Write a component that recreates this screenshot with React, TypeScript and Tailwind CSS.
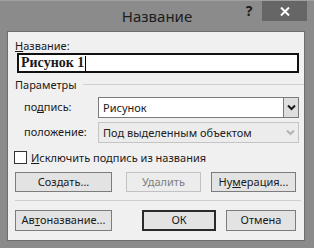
import React from 'react';

function Chevron({ disabled }: { disabled?: boolean }) {
  return (
    <svg width="9" height="7" viewBox="0 0 9 7" className="block">
      <path
        d="M1 1.5 L4.5 5 L8 1.5"
        fill="none"
        stroke={disabled ? '#b4b4b4' : '#1a1a1a'}
        strokeWidth="2"
      />
    </svg>
  );
}

function Select({ value, disabled }: { value: string; disabled?: boolean }) {
  return (
    <div
      className={`flex h-[21px] w-[201px] border ${
        disabled ? 'border-[#c4c4c4] bg-[#ececec] text-[#222]' : 'border-[#7a7a7a] bg-white text-[#1a1a1a]'
      }`}
    >
      <div className="flex-1 pl-[4px] leading-[19px]">{value}</div>
      <div
        className={`flex w-[15px] items-center justify-center ${
          disabled ? 'bg-[#ececec]' : 'border-l border-[#7a7a7a] bg-[#dedede]'
        }`}
      >
        <Chevron disabled={disabled} />
      </div>
    </div>
  );
}

function Btn({
  children,
  w,
  disabled,
  primary,
  h = 'h-[20px]',
}: {
  children: React.ReactNode;
  w: string;
  disabled?: boolean;
  primary?: boolean;
  h?: string;
}) {
  const border = primary
    ? 'border-2 border-[#2a2a2a]'
    : disabled
    ? 'border border-[#c2c2c2]'
    : 'border border-[#7c7c7c]';
  return (
    <div
      className={`${w} ${h} ${border} flex items-center justify-center ${
        disabled ? 'bg-[#ececec] text-[#7e7e7e]' : 'bg-[#e3e3e3] text-[#1a1a1a]'
      }`}
    >
      {children}
    </div>
  );
}

export default function App() {
  return (
    <div
      className="flex h-[248px] w-[314px] flex-col bg-[#8b8b8b] text-[11px]"
      style={{ fontFamily: '"Noto Sans", "Open Sans", sans-serif' }}
    >
      {/* title bar */}
      <div className="relative flex h-[31px] shrink-0 justify-center border-t border-[#a0a0a0]">
        <span className="pt-[4px] text-[15px] leading-[22px] text-[#1c1c1c]">Название</span>
        <div className="absolute right-[7px] top-0 flex">
          <div className="w-[26px] pt-[1px] text-center text-[14px] font-bold leading-[18px] text-[#1c1c1c]">?</div>
          <div className="flex h-[20px] w-[45px] items-center justify-center bg-[#666666]">
            <svg width="10" height="9" viewBox="0 0 10 9">
              <path d="M1 0.5 L9 8.5 M9 0.5 L1 8.5" stroke="#fff" strokeWidth="2" />
            </svg>
          </div>
        </div>
      </div>

      {/* client area */}
      <div className="ml-[7px] flex h-[210px] w-[298px] flex-col border border-[#6e6e6e] bg-[#f0f0f0] pl-[7px] pt-[6px] text-[#1a1a1a]">
        <div className="leading-[15px]">
          <span className="underline">Н</span>азвание:
        </div>
        <div className="ml-[2px] flex h-[20px] w-[282px] items-center border-2 border-[#111] bg-white pl-[2px]">
          <span className="text-[14px] font-bold leading-[16px]" style={{ fontFamily: '"Liberation Serif", serif' }}>
            Рисунок 1
          </span>
          <span className="ml-[1px] h-[15px] w-px bg-black" />
        </div>

        <div className="mt-[4px] flex items-center">
          <span className="leading-[15px]">Параметры</span>
          <div className="ml-[6px] h-px flex-1 bg-[#d0d0d0]" />
        </div>

        <div className="mt-[5px] flex items-center">
          <span className="ml-[9px] w-[74px]">
            по<span className="underline">д</span>пись:
          </span>
          <Select value="Рисунок" />
        </div>
        <div className="mt-[4px] flex items-center">
          <span className="ml-[9px] w-[74px]">положение:</span>
          <Select value="Под выделенным объектом" disabled />
        </div>

        <div className="-ml-[1px] mt-[8px] flex items-center">
          <div className="h-[13px] w-[13px] border border-[#333] bg-white" />
          <span className="ml-[4px] leading-[13px]">
            <span className="underline">И</span>сключить подпись из названия
          </span>
        </div>

        <div className="mt-[8px] flex">
          <Btn w="w-[97px]">
            Соз<span className="underline">д</span>ать...
          </Btn>
          <div className="ml-[14px]">
            <Btn w="w-[75px]" disabled>
              Удалить
            </Btn>
          </div>
          <div className="ml-[10px]">
            <Btn w="w-[85px]">
              Ну<span className="underline">м</span>ерация...
            </Btn>
          </div>
        </div>

        <div className="mt-[8px] h-px w-[286px] bg-[#cfcfcf]" />

        <div className="mt-[9px] flex">
          <Btn w="w-[97px]" h="h-[21px]">
            Ав<span className="underline">т</span>оназвание...
          </Btn>
          <div className="ml-[30px]">
            <Btn w="w-[74px]" h="h-[21px]" primary>
              ОК
            </Btn>
          </div>
          <div className="ml-[10px]">
            <Btn w="w-[70px]" h="h-[21px]">
              Отмена
            </Btn>
          </div>
        </div>
      </div>
    </div>
  );
}
